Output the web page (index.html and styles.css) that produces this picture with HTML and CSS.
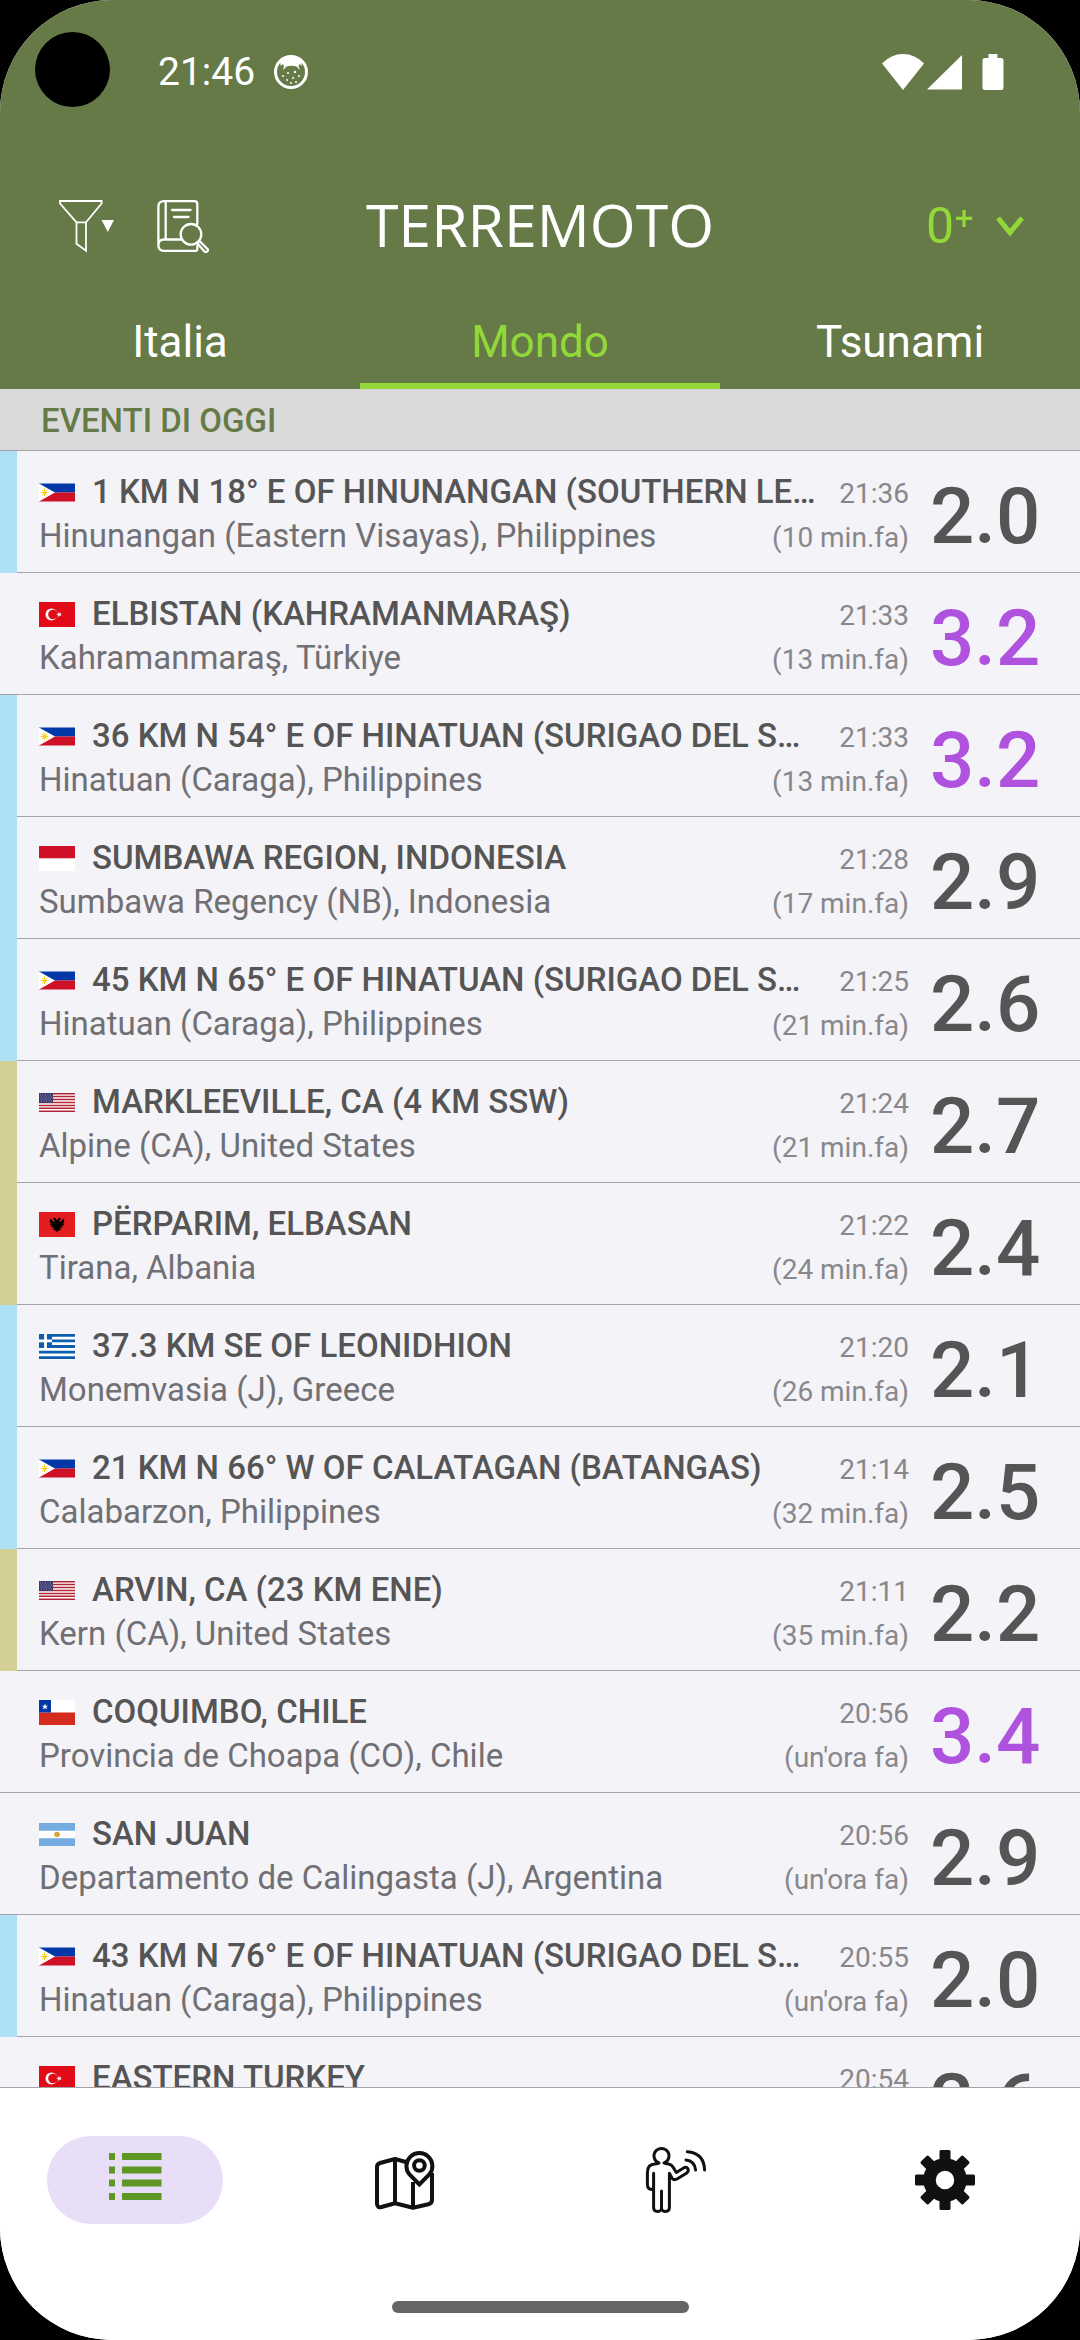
FILE: index.html
```html
<!DOCTYPE html>
<html lang="it">
<head>
<meta charset="utf-8">
<meta name="viewport" content="width=device-width, initial-scale=1">
<title>Terremoto</title>
<link rel="stylesheet" href="styles.css">
</head>
<body>
<!-- flags -->
<svg class="defs" aria-hidden="true">
	<symbol id="ph" viewBox="0 0 36 18">
		<path fill="#0038a8" d="M0 0h36v9H0z"/><path fill="#ce1126" d="M0 9h36v9H0z"/><path fill="#fff" d="M0 0l16 9-16 9z"/>
		<circle cx="5.500" cy="9" r="2" fill="#f5cf2e"/>
		<path stroke="#f5cf2e" d="M5.500 5v8M1.500 9h8M2.700 6.200l5.600 5.600M8.300 6.200l-5.600 5.600"/>
	</symbol>
	<symbol id="tr" viewBox="0 0 36 25">
		<path fill="#e30a17" d="M0 0h36v25H0z"/><circle cx="12.500" cy="12.500" r="6" fill="#fff"/><circle cx="14" cy="12.500" r="4.800" fill="#e30a17"/>
		<path fill="#fff" d="M17.300 12.500l2-.7v-2.100l1.300 1.700 2-.6-1.200 1.700 1.200 1.700-2-.6-1.300 1.700v-2.100z"/>
	</symbol>
	<symbol id="id" viewBox="0 0 36 25"><path fill="#ce1126" d="M0 0h36v12.500H0z"/><path fill="#fff" d="M0 12.500h36V25H0z"/></symbol>
	<symbol id="us" viewBox="0 0 36 19">
		<path fill="#fff" d="M0 0h36v19H0z"/>
		<path stroke="#b22234" stroke-width="1.460" d="M0 .7h36M0 3.600h36M0 6.600h36M0 9.500h36M0 12.400h36M0 15.300h36M0 18.300h36"/>
		<path fill="#3c3b6e" d="M0 0h14v10H0z"/>
		<path stroke="#a9a9c8" stroke-width=".8" stroke-dasharray="1 1.500" d="M1 2h12M2 4h11M1 6h12M2 8h11"/>
	</symbol>
	<symbol id="al" viewBox="0 0 36 25">
		<path fill="#e41e20" d="M0 0h36v25H0z"/>
		<path d="M18 8.500L16.500 6l-3 .3 2 1.900v2L11 6.500v2l1 .7-1.500-.2.500 1.800 1.500.7-1.500.2.500 1.500 2 .3-1.500 1.200 1.500 1 2-.7-2 3 2-.4.300 1.400 1-.6L18 20.500l1.200-2.100 1 .6.300-1.400 2 .4-2-3 2 .7 1.500-1-1.500-1.200 2-.3.500-1.500-1.500-.2 1.500-.7.500-1.800-1.500.2 1-.7v-2l-4.500 3.700v-2l2-1.900-3-.3z"/>
	</symbol>
	<symbol id="gr" viewBox="0 0 36 25">
		<path fill="#fff" d="M0 0h36v25H0z"/>
		<path stroke="#0d5eaf" stroke-width="2.780" d="M0 1.400h36M0 6.900h36M0 12.500h36M0 18.100h36M0 23.600h36"/>
		<path fill="#0d5eaf" d="M0 0h13v13.900H0z"/><path stroke="#fff" stroke-width="2.800" d="M6.500 0v13.900M0 6.900h13"/>
	</symbol>
	<symbol id="cl" viewBox="0 0 36 25">
		<path fill="#fff" d="M12 0h24v12.500H12z"/><path fill="#d52b1e" d="M0 12.500h36V25H0z"/><path fill="#0039a6" d="M0 0h12v12.500H0z"/>
		<path fill="#fff" d="M6 3.500l.8 2.200h2.300L7.300 7.100l.7 2.300L6 8l-2 1.400.7-2.300-1.800-1.400h2.300z"/>
	</symbol>
	<symbol id="ar" viewBox="0 0 36 23">
		<path fill="#74acdf" d="M0 0h36v23H0z"/><path fill="#fff" d="M0 7.700h36v7.600H0z"/><circle cx="18" cy="11.500" r="2.800" fill="#dea23c"/>
	</symbol>
</svg>

<div class="screen">
	<header class="header">
		<div class="statusbar">
			<span class="camera"></span>
			<span class="clock">21:46</span>
			<svg class="face" width="36" height="36" viewBox="0 0 36 36">
				<circle cx="18" cy="18" r="15.500" fill="none" stroke="#fff" stroke-width="3"/>
				<path fill="#fff" d="M7 5Q18-1 29 5l-.5 7-2-2-1 2 1.500 4-3.500-3.500q-5.500-1.500-10 0L10 16l1-4-1.500-2-2 2z"/>
				<g fill="#fff"><circle cx="10" cy="22" r="1"/><circle cx="15" cy="19" r="1"/><circle cx="22" cy="18" r="1.200"/><circle cx="26" cy="22" r="1"/><circle cx="20" cy="24" r="1"/><circle cx="14" cy="26" r="1"/><circle cx="18" cy="29" r="1"/><circle cx="23" cy="28" r="1"/></g>
			</svg>
			<span class="signals">
				<svg width="42" height="36" viewBox="0 0 42 36"><path fill="#fff" d="M21 36L0 9.500Q9 0 21 0t21 9.500z"/></svg>
				<svg width="36" height="36" viewBox="0 0 36 36"><path fill="#fff" d="M35 1v34.500H0z"/></svg>
				<svg class="battery" width="22" height="36" viewBox="0 0 22 36"><path fill="#fff" d="M6.500 0h9v4H19q2.500 0 2.500 2.500v27Q21.500 36 19 36H3Q.5 36 .5 33.500v-27Q.5 4 3 4h3.500z"/></svg>
			</span>
		</div>
		<div class="toolbar">
			<div class="tools">
				<button type="button" class="tool" aria-label="Filtro">
					<svg width="56" height="53" viewBox="0 0 56 53"><path fill="none" stroke="#fff" stroke-width="1.800" d="M1 1h41.600v2.500L27 22.300v28.400l-9.500-7V22.300L1 3.500zM17.500 22.300H27"/><path fill="#fff" d="M42.500 20h12.500l-6.200 12z"/></svg>
				</button>
				<button type="button" class="tool" aria-label="Cerca">
					<svg width="52" height="53" viewBox="0 0 52 53" fill="none" stroke="#fff" stroke-width="2.300" stroke-linecap="round" stroke-linejoin="round">
						<path d="M40.300 24V4q0-2.800-2.800-2.800H7q-5.600 0-5.600 5.600v38.500q0 5.600 5.600 5.600h32q1.300 0 1.300-1.300v-3.500M8.700 1.200V39.500M24.500 39.500H7q-5.600 0-5.600 5.500M15 10h18.500M17 17h14.500"/>
						<circle cx="34" cy="34.300" r="10.300"/>
						<path d="M40 43l2.500-2 8 8q1 1.300-.3 2.500t-2.500.2l-7.700-8.700"/>
					</svg>
				</button>
			</div>
			<h1 class="title">TERREMOTO</h1>
			<div class="threshold">
				<select class="threshold-select" aria-label="Magnitudo minima"><option>0⁺</option></select>
				<svg width="28" height="21" viewBox="0 0 28 21"><path fill="none" stroke="#92d839" stroke-width="5" d="M2 2l12 14.500L26 2"/></svg>
			</div>
		</div>
		<nav class="tabs">
			<button type="button" class="tab">Italia</button>
			<button type="button" class="tab active">Mondo</button>
			<button type="button" class="tab">Tsunami</button>
		</nav>
	</header>

	<main class="list">
		<h2 class="section">EVENTI DI OGGI</h2>
		<ul class="events">
			<li class="event sea">
				<div class="info">
					<div class="line"><svg class="flag"><use href="#ph"/></svg><h3 class="place">1 KM N 18° E OF HINUNANGAN (SOUTHERN LE…</h3><time class="time">21:36</time></div>
					<div class="line"><p class="region">Hinunangan (Eastern Visayas), Philippines</p><span class="time">(10 min.fa)</span></div>
				</div>
				<strong class="mag">2.0</strong>
			</li>
			<li class="event">
				<div class="info">
					<div class="line"><svg class="flag"><use href="#tr"/></svg><h3 class="place">ELBISTAN (KAHRAMANMARAŞ)</h3><time class="time">21:33</time></div>
					<div class="line"><p class="region">Kahramanmaraş, Türkiye</p><span class="time">(13 min.fa)</span></div>
				</div>
				<strong class="mag strong">3.2</strong>
			</li>
			<li class="event sea">
				<div class="info">
					<div class="line"><svg class="flag"><use href="#ph"/></svg><h3 class="place">36 KM N 54° E OF HINATUAN (SURIGAO DEL S…</h3><time class="time">21:33</time></div>
					<div class="line"><p class="region">Hinatuan (Caraga), Philippines</p><span class="time">(13 min.fa)</span></div>
				</div>
				<strong class="mag strong">3.2</strong>
			</li>
			<li class="event sea">
				<div class="info">
					<div class="line"><svg class="flag"><use href="#id"/></svg><h3 class="place">SUMBAWA REGION, INDONESIA</h3><time class="time">21:28</time></div>
					<div class="line"><p class="region">Sumbawa Regency (NB), Indonesia</p><span class="time">(17 min.fa)</span></div>
				</div>
				<strong class="mag">2.9</strong>
			</li>
			<li class="event sea">
				<div class="info">
					<div class="line"><svg class="flag"><use href="#ph"/></svg><h3 class="place">45 KM N 65° E OF HINATUAN (SURIGAO DEL S…</h3><time class="time">21:25</time></div>
					<div class="line"><p class="region">Hinatuan (Caraga), Philippines</p><span class="time">(21 min.fa)</span></div>
				</div>
				<strong class="mag">2.6</strong>
			</li>
			<li class="event land">
				<div class="info">
					<div class="line"><svg class="flag"><use href="#us"/></svg><h3 class="place">MARKLEEVILLE, CA (4 KM SSW)</h3><time class="time">21:24</time></div>
					<div class="line"><p class="region">Alpine (CA), United States</p><span class="time">(21 min.fa)</span></div>
				</div>
				<strong class="mag">2.7</strong>
			</li>
			<li class="event land">
				<div class="info">
					<div class="line"><svg class="flag"><use href="#al"/></svg><h3 class="place">PËRPARIM, ELBASAN</h3><time class="time">21:22</time></div>
					<div class="line"><p class="region">Tirana, Albania</p><span class="time">(24 min.fa)</span></div>
				</div>
				<strong class="mag">2.4</strong>
			</li>
			<li class="event sea">
				<div class="info">
					<div class="line"><svg class="flag"><use href="#gr"/></svg><h3 class="place">37.3 KM SE OF LEONIDHION</h3><time class="time">21:20</time></div>
					<div class="line"><p class="region">Monemvasia (J), Greece</p><span class="time">(26 min.fa)</span></div>
				</div>
				<strong class="mag">2.1</strong>
			</li>
			<li class="event sea">
				<div class="info">
					<div class="line"><svg class="flag"><use href="#ph"/></svg><h3 class="place">21 KM N 66° W OF CALATAGAN (BATANGAS)</h3><time class="time">21:14</time></div>
					<div class="line"><p class="region">Calabarzon, Philippines</p><span class="time">(32 min.fa)</span></div>
				</div>
				<strong class="mag">2.5</strong>
			</li>
			<li class="event land">
				<div class="info">
					<div class="line"><svg class="flag"><use href="#us"/></svg><h3 class="place">ARVIN, CA (23 KM ENE)</h3><time class="time">21:11</time></div>
					<div class="line"><p class="region">Kern (CA), United States</p><span class="time">(35 min.fa)</span></div>
				</div>
				<strong class="mag">2.2</strong>
			</li>
			<li class="event">
				<div class="info">
					<div class="line"><svg class="flag"><use href="#cl"/></svg><h3 class="place">COQUIMBO, CHILE</h3><time class="time">20:56</time></div>
					<div class="line"><p class="region">Provincia de Choapa (CO), Chile</p><span class="time">(un'ora fa)</span></div>
				</div>
				<strong class="mag strong">3.4</strong>
			</li>
			<li class="event">
				<div class="info">
					<div class="line"><svg class="flag"><use href="#ar"/></svg><h3 class="place">SAN JUAN</h3><time class="time">20:56</time></div>
					<div class="line"><p class="region">Departamento de Calingasta (J), Argentina</p><span class="time">(un'ora fa)</span></div>
				</div>
				<strong class="mag">2.9</strong>
			</li>
			<li class="event sea">
				<div class="info">
					<div class="line"><svg class="flag"><use href="#ph"/></svg><h3 class="place">43 KM N 76° E OF HINATUAN (SURIGAO DEL S…</h3><time class="time">20:55</time></div>
					<div class="line"><p class="region">Hinatuan (Caraga), Philippines</p><span class="time">(un'ora fa)</span></div>
				</div>
				<strong class="mag">2.0</strong>
			</li>
			<li class="event">
				<div class="info">
					<div class="line"><svg class="flag"><use href="#tr"/></svg><h3 class="place">EASTERN TURKEY</h3><time class="time">20:54</time></div>
				</div>
				<strong class="mag">2.6</strong>
			</li>
		</ul>
	</main>

	<footer class="bottom">
		<nav class="nav">
			<a href="#lista" class="nav-item active" aria-label="Lista">
				<svg width="54" height="54" viewBox="0 0 54 54"><path stroke="#5f9727" stroke-width="7" d="M1 3.500h6M14 3.500h39.500M1 17h6M14 17h39.500M1 30h6M14 30h39.500M1 43.500h6M14 43.500h39.500"/></svg>
			</a>
			<a href="#mappa" class="nav-item" aria-label="Mappa">
				<svg width="60" height="60" viewBox="0 0 60 60" fill="none" stroke="#111" stroke-width="4" stroke-linejoin="round">
					<path d="M31 12L20 9 5 13Q2 14 2 17v36.500q0 4.500 4.500 3.500L20 53.300l18 4.500 15.500-3.600q3.500-.8 3.500-4.200V23M20 9v44.300M38 32v25.500"/>
					<path stroke-linejoin="miter" d="M44.400 34.500L34.500 24.500A13 13 0 1 1 54.300 24.500z"/>
					<circle cx="44.400" cy="15.500" r="5.300"/>
				</svg>
			</a>
			<a href="#segnala" class="nav-item" aria-label="Segnala">
				<svg width="64" height="68" viewBox="-2 0 64 68" fill="none" stroke="#111" stroke-width="3" stroke-linecap="round" stroke-linejoin="round">
					<path d="M14 17a7.500 7.500 0 1 1 5 0q1 1 4.500 1 3 .5 4.500 3l3.300 5.500 7.700-4.800q2.500-1.300 3.800.8t-1 4.500L32 33q-3 1.500-5-.8l-2.600-4.900v34Q24.400 65.500 20.500 65.500q-3 0-4-2.500-1 2.500-4 2.500-3.900 0-3.900-4.200v-34M8.600 43.500Q2.400 44 2.400 38.500V26.500Q2.500 18 10 18q3 0 4-1M16.500 45v18M42.300 5.700Q59 7 59.600 24M41 14q8.500.8 9.600 10"/>
				</svg>
			</a>
			<a href="#impostazioni" class="nav-item" aria-label="Impostazioni">
				<svg width="60" height="60" viewBox="-30 -30 60 60">
					<circle r="15.500" fill="none" stroke="#111" stroke-width="12.500"/>
					<g fill="#111">
						<rect x="-5.500" y="-30" width="11" height="12" rx="1.500"/><rect x="-5.500" y="18" width="11" height="12" rx="1.500"/>
						<rect x="-30" y="-5.500" width="12" height="11" rx="1.500"/><rect x="18" y="-5.500" width="12" height="11" rx="1.500"/>
					</g>
					<g fill="#111" transform="rotate(45)">
						<rect x="-5.500" y="-30" width="11" height="12" rx="1.500"/><rect x="-5.500" y="18" width="11" height="12" rx="1.500"/>
						<rect x="-30" y="-5.500" width="12" height="11" rx="1.500"/><rect x="18" y="-5.500" width="12" height="11" rx="1.500"/>
					</g>
				</svg>
			</a>
		</nav>
		<div class="handle"></div>
	</footer>
</div>
</body>
</html>
```
FILE: styles.css
```css
*{margin:0;padding:0;box-sizing:border-box;}
body{background:#000;font-family:Roboto,"Noto Sans",sans-serif;}
ul{list-style:none;}
button,select{border:0;background:none;font-family:inherit;color:inherit;cursor:pointer;}
svg{display:block;flex:none;}
.defs{position:absolute;width:0;height:0;}
.screen{height:100vh;display:flex;flex-direction:column;overflow:hidden;border-radius:112px;background:#fff;}

/* header */
.header{flex:none;background:#667a48;color:#fff;}
.statusbar{position:relative;display:flex;align-items:center;height:144px;padding:0 76px 0 158px;}
.camera{position:absolute;left:35px;top:32px;width:75px;height:75px;border-radius:50%;background:#000;}
.clock{font-size:39px;line-height:48px;}
.face{margin-left:18px;}
.signals{display:flex;align-items:center;gap:3px;margin-left:auto;}
.battery{margin-left:16px;}
.toolbar{display:grid;grid-template-columns:1fr auto 1fr;align-items:center;height:164px;padding:0 56px;}
.tools{display:flex;gap:42px;padding-left:3px;}
.title{padding-bottom:4px;font-family:"Open Sans","Noto Sans",sans-serif;font-size:59px;font-weight:400;line-height:80px;}
.threshold{display:flex;align-items:center;justify-content:flex-end;gap:21px;color:#92d839;}
.threshold-select{appearance:none;font-size:50px;line-height:60px;}
.tabs{display:flex;}
.tab{flex:1;height:81px;padding-bottom:8px;border-bottom:6px solid transparent;font-size:44px;line-height:52px;}
.tab.active{color:#92d839;border-bottom-color:#92d839;}

/* list */
.list{flex:1;min-height:0;overflow:hidden;background:#f4f3f8;}
.section{height:62px;padding-left:41px;border-bottom:1px solid #a3a3a8;background:#dadada;color:#667a48;font-size:33px;font-weight:500;line-height:63px;}
.event{display:flex;}
.event::before{content:"";flex:none;width:17px;border-bottom:1px solid #a3a3a8;}
.event.sea::before{background:#ade0f5;border-color:#ade0f5;}
.event.land::before{background:#d4cf94;border-color:#d4cf94;}
.info{flex:1;min-width:0;height:122px;padding:19px 0 0 22px;border-bottom:1px solid #a3a3a8;}
.line{display:flex;align-items:baseline;height:44px;line-height:44px;}
.flag{align-self:center;width:36px;height:25px;margin-right:17px;}
.place{flex:1;min-width:0;overflow:hidden;text-overflow:ellipsis;white-space:nowrap;color:#555;font-size:33px;font-weight:500;}
.region{flex:1;min-width:0;color:#707074;font-size:33px;white-space:nowrap;}
.time{color:#88888c;font-size:28px;}
.mag{flex:none;width:171px;height:122px;padding:9px 0 0 21px;border-bottom:1px solid #a3a3a8;color:#555;font-size:78px;font-weight:500;line-height:113px;}
.mag.strong{color:#af52de;}

/* bottom bar */
.bottom{flex:none;padding:48px 0 27px;border-top:1px solid #a3a3a8;background:#fff;}
.nav{display:flex;justify-content:space-around;}
.nav-item{display:flex;align-items:center;justify-content:center;width:176px;height:88px;border-radius:44px;}
.nav-item.active{background:#e8def7;}
.handle{width:297px;height:12px;margin:77px auto 0;border-radius:6px;background:#666;}
```
